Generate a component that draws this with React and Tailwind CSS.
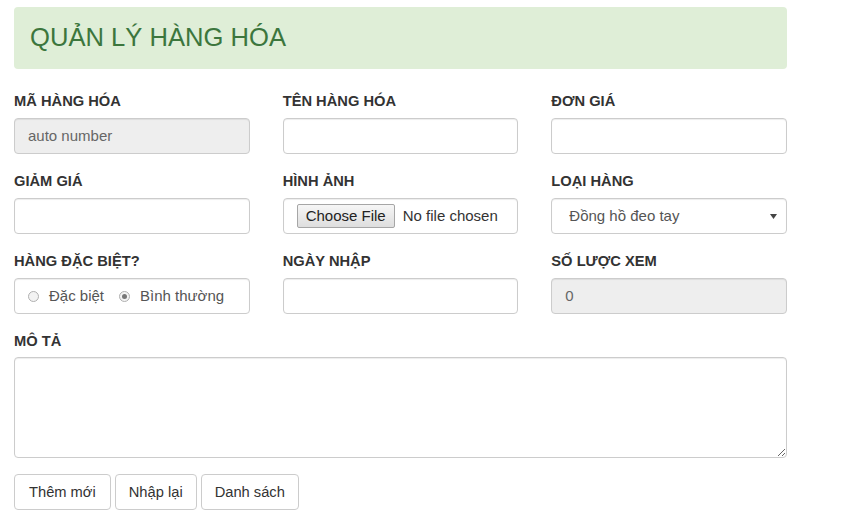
import { useState } from "react";

const font = { fontFamily: '"Liberation Sans", Arial, sans-serif' };

const inputCls =
    "block h-[36px] w-full rounded-[4px] border border-[#cccccc] px-[13px] text-[15px] text-[#555555] shadow-[inset_0_1px_1px_rgba(0,0,0,0.075)] outline-none";

function Field({ label, children }) {
    return (
        <div>
            <label className="mb-[7px] block text-[14.7px] font-bold leading-[20px] text-[#333333]">{label}</label>
            {children}
        </div>
    );
}

function Radio({ checked, children }) {
    return (
        <span className="inline-flex items-center">
            <span className="mr-[10px] flex h-[11px] w-[11px] items-center justify-center rounded-full border border-[#b0b0b0] bg-[#f3f3f3]">
                {checked && <span className="h-[5px] w-[5px] rounded-full bg-[#777777]" />}
            </span>
            <span>{children}</span>
        </span>
    );
}

export default function App() {
    const [note, setNote] = useState("");

    return (
        <div className="min-h-screen bg-white" style={font}>
            <div className="ml-[14px] w-[773px] pt-[7px]">
                {/* Header */}
                <div className="flex h-[62px] items-center rounded-[4px] bg-[#dfeed7] pl-[16px]">
                    <h2 className="text-[25.6px] font-normal leading-none text-[#3c763d]">QUẢN LÝ HÀNG HÓA</h2>
                </div>

                {/* Form grid */}
                <div className="mt-[22px] grid grid-cols-3 gap-x-[33px] gap-y-[17px]">
                    <Field label="MÃ HÀNG HÓA">
                        <div className={`${inputCls} flex items-center bg-[#eeeeee] text-[#666666]`}>auto number</div>
                    </Field>
                    <Field label="TÊN HÀNG HÓA">
                        <input className={`${inputCls} bg-white`} />
                    </Field>
                    <Field label="ĐƠN GIÁ">
                        <input className={`${inputCls} bg-white`} />
                    </Field>

                    <Field label="GIẢM GIÁ">
                        <input className={`${inputCls} bg-white`} />
                    </Field>
                    <Field label="HÌNH ẢNH">
                        <div className={`${inputCls} flex items-center bg-white`}>
                            <span className="rounded-[2px] border border-[#a6a6a6] bg-gradient-to-b from-[#f6f6f6] to-[#dedede] px-[8px] leading-[22px] text-[#222222]">
                                Choose File
                            </span>
                            <span className="ml-[8px] text-[#333333]">No file chosen</span>
                        </div>
                    </Field>
                    <Field label="LOẠI HÀNG">
                        <div className={`${inputCls} flex items-center justify-between bg-white pl-[17px] pr-[9px]`}>
                            <span>Đồng hồ đeo tay</span>
                            <svg width="7" height="5" viewBox="0 0 7 5">
                                <path d="M0 0 L7 0 L3.5 5 Z" fill="#444" />
                            </svg>
                        </div>
                    </Field>

                    <Field label="HÀNG ĐẶC BIỆT?">
                        <div className={`${inputCls} flex items-center gap-[15px] bg-white text-[#555555]`}>
                            <Radio>Đặc biệt</Radio>
                            <Radio checked>Bình thường</Radio>
                        </div>
                    </Field>
                    <Field label="NGÀY NHẬP">
                        <input className={`${inputCls} bg-white`} />
                    </Field>
                    <Field label="SỐ LƯỢC XEM">
                        <div className={`${inputCls} flex items-center bg-[#eeeeee] text-[#666666]`}>0</div>
                    </Field>
                </div>

                {/* Description */}
                <div className="mt-[17px]">
                    <label className="mb-[6px] block text-[14.7px] font-bold leading-[20px] text-[#333333]">MÔ TẢ</label>
                    <textarea
                        value={note}
                        onChange={(e) => setNote(e.target.value)}
                        className="block h-[101px] w-full rounded-[4px] border border-[#cccccc] px-[13px] py-[7px] text-[15px] text-[#555555] shadow-[inset_0_1px_1px_rgba(0,0,0,0.075)] outline-none"
                    />
                </div>

                {/* Buttons */}
                <div className="mt-[16px] flex gap-[4px]">
                    <button className="h-[36px] rounded-[4px] border border-[#cccccc] bg-white px-[14px] text-[14.7px] text-[#333333]">
                        Thêm mới
                    </button>
                    <button className="h-[36px] rounded-[4px] border border-[#cccccc] bg-white px-[13px] text-[14.7px] text-[#333333]">
                        Nhập lại
                    </button>
                    <button className="h-[36px] rounded-[4px] border border-[#cccccc] bg-white px-[13px] text-[14.7px] text-[#333333]">
                        Danh sách
                    </button>
                </div>
            </div>
        </div>
    );
}
